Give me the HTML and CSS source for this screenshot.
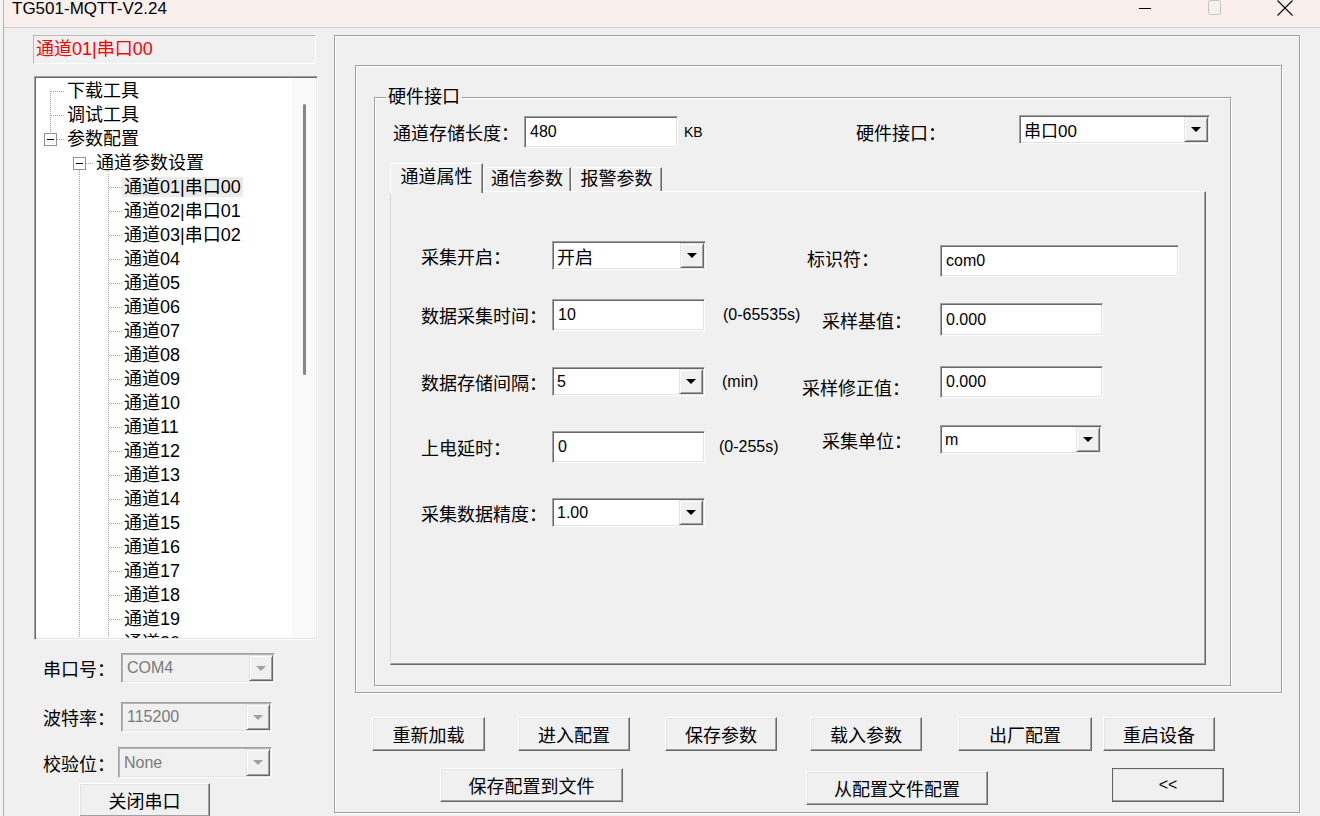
FILE: index.html
```html
<!DOCTYPE html>
<html lang="zh-CN">
<head>
    <meta charset="UTF-8">
    <title>TG501-MQTT-V2.24</title>
    <link rel="stylesheet" href="styles.css">
</head>
<body>
<div class="window">
    <div class="titlebar">
        <span class="title">TG501-MQTT-V2.24</span>
        <div class="caption-buttons">
            <span class="cap"><svg width="14" height="16"><line x1="1" y1="8.5" x2="13" y2="8.5" stroke="#000"/></svg></span>
            <span class="cap"><svg width="14" height="16"><rect x="0.5" y="0.5" width="12" height="14" rx="2" fill="none" stroke="#c4c4c4"/></svg></span>
            <span class="cap"><svg width="16" height="16"><path d="M0.5 0.5 L15.5 15.5 M15.5 0.5 L0.5 15.5" stroke="#000" stroke-width="1.1"/></svg></span>
        </div>
    </div>

    <div class="main">
        <!-- left: channel tree + serial port -->
        <div class="left">
            <div class="status">通道01|串口00</div>

            <div class="tree">
                <div class="tree-body">
                    <svg class="tree-lines" width="256" height="560">
                        <path d="M14.5 13 V55 M15 13.5 H28 M15 37.5 H28 M21 61.5 H28 M50 85.5 H57 M43.5 92 V560 M72.5 96 V560
                                 M73 109.5 H86 M73 133.5 H86 M73 157.5 H86 M73 181.5 H86 M73 205.5 H86 M73 229.5 H86
                                 M73 253.5 H86 M73 277.5 H86 M73 301.5 H86 M73 325.5 H86 M73 349.5 H86 M73 373.5 H86
                                 M73 397.5 H86 M73 421.5 H86 M73 445.5 H86 M73 469.5 H86 M73 493.5 H86 M73 517.5 H86 M73 541.5 H86"
                              stroke="#a0a0a0" stroke-dasharray="1 1" fill="none"/>
                        <rect x="8.5" y="55.5" width="12" height="12" fill="#fff" stroke="#919191"/>
                        <path d="M11 61.5 H18" stroke="#000"/>
                        <rect x="37.5" y="79.5" width="12" height="12" fill="#fff" stroke="#919191"/>
                        <path d="M40 85.5 H47" stroke="#000"/>
                    </svg>
                    <div class="node l0">下载工具</div>
                    <div class="node l0">调试工具</div>
                    <div class="node l0">参数配置</div>
                    <div class="node l1">通道参数设置</div>
                    <div class="node l2 selected"><span>通道01|串口00</span></div>
                    <div class="node l2">通道02|串口01</div>
                    <div class="node l2">通道03|串口02</div>
                    <div class="node l2">通道04</div>
                    <div class="node l2">通道05</div>
                    <div class="node l2">通道06</div>
                    <div class="node l2">通道07</div>
                    <div class="node l2">通道08</div>
                    <div class="node l2">通道09</div>
                    <div class="node l2">通道10</div>
                    <div class="node l2">通道11</div>
                    <div class="node l2">通道12</div>
                    <div class="node l2">通道13</div>
                    <div class="node l2">通道14</div>
                    <div class="node l2">通道15</div>
                    <div class="node l2">通道16</div>
                    <div class="node l2">通道17</div>
                    <div class="node l2">通道18</div>
                    <div class="node l2">通道19</div>
                    <div class="node l2">通道20</div>
                </div>
                <div class="scroll"><div class="thumb"></div></div>
            </div>

            <div class="port-row row-port">
                <span class="port-label">串口号：</span>
                <div class="combo disabled w154"><span class="value">COM4</span><span class="drop"></span></div>
            </div>
            <div class="port-row row-baud">
                <span class="port-label">波特率：</span>
                <div class="combo disabled w151"><span class="value">115200</span><span class="drop"></span></div>
            </div>
            <div class="port-row row-parity">
                <span class="port-label narrow">校验位：</span>
                <div class="combo disabled w154"><span class="value">None</span><span class="drop"></span></div>
            </div>
            <button class="btn close-port">关闭串口</button>
        </div>

        <!-- right: channel parameters -->
        <div class="frame-outer">
            <div class="frame-inner">
                <div class="group">
                    <div class="legend">硬件接口</div>

                    <div class="store-row">
                        <span class="lbl">通道存储长度：</span>
                        <input class="edit store-edit" value="480">
                        <span class="unit">KB</span>
                        <span class="hw-lbl">硬件接口：</span>
                        <div class="combo hw-combo"><span class="value cjk">串口00</span><span class="drop"></span></div>
                    </div>

                    <div class="tabs">
                        <div class="tab active">通道属性</div>
                        <div class="tab t-comm">通信参数</div>
                        <div class="tab t-alarm">报警参数</div>
                    </div>

                    <div class="tab-page">
                        <div class="col-left">
                            <div class="frow row-open">
                                <span class="lbl">采集开启：</span>
                                <div class="combo w154"><span class="value cjk">开启</span><span class="drop"></span></div>
                            </div>
                            <div class="frow row-period">
                                <span class="lbl">数据采集时间：</span>
                                <input class="edit w153" value="10">
                                <span class="note n-period">(0-65535s)</span>
                            </div>
                            <div class="frow row-interval">
                                <span class="lbl">数据存储间隔：</span>
                                <div class="combo w153"><span class="value">5</span><span class="drop"></span></div>
                                <span class="note n-interval">(min)</span>
                            </div>
                            <div class="frow row-delay">
                                <span class="lbl">上电延时：</span>
                                <input class="edit w153" value="0">
                                <span class="note n-delay">(0-255s)</span>
                            </div>
                            <div class="frow row-precision">
                                <span class="lbl">采集数据精度：</span>
                                <div class="combo w153"><span class="value">1.00</span><span class="drop"></span></div>
                            </div>
                        </div>

                        <div class="col-right">
                            <div class="frow row-tag">
                                <span class="rlbl">标识符：</span>
                                <input class="edit w239" value="com0">
                            </div>
                            <div class="frow row-base">
                                <span class="rlbl">采样基值：</span>
                                <input class="edit w163" value="0.000">
                            </div>
                            <div class="frow row-fix">
                                <span class="rlbl">采样修正值：</span>
                                <input class="edit w163" value="0.000">
                            </div>
                            <div class="frow row-unit">
                                <span class="rlbl">采集单位：</span>
                                <div class="combo w162"><span class="value">m</span><span class="drop"></span></div>
                            </div>
                        </div>
                    </div>
                </div>
            </div>

            <div class="btn-row first">
                <button class="btn b-reload">重新加载</button>
                <button class="btn b-enter">进入配置</button>
                <button class="btn b-save">保存参数</button>
                <button class="btn b-load">载入参数</button>
                <button class="btn b-factory">出厂配置</button>
                <button class="btn b-reboot">重启设备</button>
            </div>
            <div class="btn-row second">
                <button class="btn b-tofile">保存配置到文件</button>
                <button class="btn b-fromfile">从配置文件配置</button>
                <button class="btn b-back">&lt;&lt;</button>
            </div>
        </div>
    </div>
</div>
</body>
</html>
```

FILE: styles.css
```css
* {
    box-sizing: border-box;
}
body {
    margin: 0;
    width: 1320px;
    height: 816px;
    overflow: hidden;
    background: #f3f3f3;
    font-family: "Liberation Sans", "Noto Sans CJK SC", sans-serif;
    font-size: 18px;
    color: #000;
}
.window {
    margin-left: 3px;
    border-left: 1px solid #b4b4b4;
    height: 816px;
    background: #f0f0f0;
}
.titlebar {
    height: 28px;
    border-bottom: 1px solid #cdcdcd;
    background: #f9efed;
    display: flex;
}
.title {
    padding-left: 8px;
    font-size: 17px;
    line-height: 17px;
}
.caption-buttons {
    margin-left: auto;
    display: flex;
}
.cap {
    width: 70px;
    display: flex;
    justify-content: center;
}
.main {
    display: flex;
    height: 788px;
}

/* left side */
.left {
    width: 326px;
    flex-shrink: 0;
}
.status {
    margin: 7px 0 0 29px;
    width: 283px;
    height: 29px;
    border: 1px solid;
    border-color: #b9b9b9 #fff #fff #b9b9b9;
    color: #f00;
    line-height: 27px;
    padding-left: 2px;
}
.tree {
    margin: 12px 0 0 30px;
    width: 284px;
    height: 564px;
    border: 1px solid;
    border-color: #a0a0a0 #fff #fff #a0a0a0;
    padding: 1px;
    box-shadow: inset 1px 1px #696969, inset -1px -1px #e3e3e3;
    display: flex;
}
.tree-body {
    position: relative;
    width: 256px;
    background: #fff;
    overflow: hidden;
    padding-top: 1px;
}
.tree-lines {
    position: absolute;
    left: 0;
    top: 0;
}
.node {
    position: relative;
    height: 24px;
    line-height: 24px;
    white-space: nowrap;
}
.l0 { padding-left: 31px; }
.l1 { padding-left: 60px; }
.l2 { padding-left: 88px; }
.selected span {
    background: #ebebeb;
    padding: 0 2px;
    margin-left: -2px;
}
.scroll {
    width: 24px;
    background: #f9f9f9;
    padding: 26px 0 0 11px;
}
.thumb {
    width: 3px;
    height: 271px;
    background: #868686;
    border-radius: 2px;
}
.port-row {
    display: flex;
    align-items: center;
    margin-left: 39px;
}
.port-label { width: 78px; }
.port-label.narrow { width: 75px; }
.row-port { margin-top: 13px; height: 30px; }
.row-baud { margin-top: 19px; height: 30px; }
.row-parity { margin-top: 15px; height: 31px; }
.close-port {
    margin: 5px 0 0 75px;
    width: 131px;
}

/* controls */
.combo {
    display: flex;
    height: 100%;
    border: 1px solid;
    border-color: #a0a0a0 #fff #fff #a0a0a0;
    padding: 1px;
    box-shadow: inset 1px 1px #696969, inset -1px -1px #e3e3e3;
    background: #fff;
    font-size: 16px;
    flex-shrink: 0;
}
.combo .value {
    flex: 1;
    padding-left: 3px;
    display: flex;
    align-items: center;
}
.combo .cjk { font-size: 18px; }
.combo .drop {
    width: 24px;
    border: 1px solid;
    border-color: #e3e3e3 #696969 #696969 #e3e3e3;
    box-shadow: inset 1px 1px #fff, inset -1px -1px #a0a0a0;
    background: #f0f0f0;
    display: flex;
    align-items: center;
    justify-content: center;
}
.combo .drop::after {
    content: "";
    border-left: 5px solid transparent;
    border-right: 5px solid transparent;
    border-top: 5px solid #000;
}
.combo.disabled {
    background: #f0f0f0;
    border-color: #a0a0a0 #fff #fff #a0a0a0;
    box-shadow: inset 1px 1px #b4b4b4, inset -1px -1px #e3e3e3;
}
.combo.disabled .value {
    color: #7a7a7a;
    padding-left: 4px;
}
.combo.disabled .drop::after {
    border-top-color: #a0a0a0;
}
.edit {
    height: 100%;
    border: 1px solid;
    border-color: #a0a0a0 #fff #fff #a0a0a0;
    box-shadow: inset 1px 1px #696969, inset -1px -1px #e3e3e3;
    background: #fff;
    font-family: inherit;
    font-size: 16px;
    padding: 0 0 0 5px;
    margin: 0;
    outline: none;
    color: #000;
    flex-shrink: 0;
}
.w151 { width: 151px; }
.w153 { width: 153px; }
.w154 { width: 154px; }
.w162 { width: 162px; }
.w163 { width: 163px; }
.w239 { width: 239px; }
.btn {
    font: inherit;
    font-size: 18px;
    height: 34px;
    padding: 0;
    color: #000;
    background: #f0f0f0;
    border: 1px solid;
    border-color: #fff #696969 #696969 #fff;
    box-shadow: inset -1px -1px #a0a0a0, inset 1px 1px #e3e3e3;
}

/* right side frames */
.frame-outer {
    margin: 7px 0 0 4px;
    width: 966px;
    height: 778px;
    border: 1px solid #a0a0a0;
    box-shadow: inset 1px 1px #fff, 1px 1px #fff;
    padding-left: 20px;
}
.frame-inner {
    margin-top: 29px;
    width: 927px;
    height: 628px;
    border: 1px solid #a0a0a0;
    box-shadow: inset 1px 1px #fff, 1px 1px #fff;
}
.group {
    margin: 31px 0 0 18px;
    width: 857px;
    height: 589px;
    border: 1px solid #a0a0a0;
    box-shadow: inset 1px 1px #fff, 1px 1px #fff;
}
.legend {
    width: fit-content;
    margin: -13px 0 -11px 11px;
    padding: 0 2px;
    line-height: 24px;
    background: #f0f0f0;
}
.store-row {
    display: flex;
    align-items: center;
    height: 34px;
    margin-top: 17px;
}
.store-row .lbl {
    margin-left: 18px;
    width: 131px;
}
.store-edit {
    width: 154px;
    height: 32px;
}
.unit {
    margin-left: 6px;
    width: 18px;
    font-size: 14px;
}
.hw-lbl {
    margin-left: 154px;
    width: 163px;
}
.hw-combo {
    width: 191px;
    height: 29px;
    align-self: flex-start;
}
.hw-combo .cjk { font-size: 17px; }

/* tabs */
.tabs {
    display: flex;
    align-items: flex-end;
    height: 28px;
    margin: 14px 0 0 15px;
}
.tab {
    height: 24px;
    width: 88px;
    border: 1px solid;
    border-bottom: none;
    border-color: #fff #696969 transparent #fff;
    box-shadow: inset -1px 0 #a0a0a0;
    text-align: center;
    line-height: 22px;
    background: #f0f0f0;
}
.tab.active {
    width: 93px;
    height: 30px;
    margin-bottom: -2px;
    position: relative;
    z-index: 1;
    line-height: 27px;
}
.tab.t-alarm { width: 91px; }
.tab-page {
    margin-left: 15px;
    width: 816px;
    height: 474px;
    border: 1px solid;
    border-color: #fff #696969 #696969 #d9d9d9;
    box-shadow: inset -1px -1px #a0a0a0;
    display: flex;
}
.col-left {
    margin-left: 30px;
    width: 379px;
    flex-shrink: 0;
}
.frow {
    display: flex;
    align-items: center;
    white-space: nowrap;
}
.frow .lbl { width: 131px; flex-shrink: 0; }
.row-open { margin-top: 49px; height: 29px; }
.row-period { margin-top: 29px; height: 32px; }
.row-interval { margin-top: 36px; height: 29px; }
.row-delay { margin-top: 35px; height: 32px; }
.row-precision { margin-top: 35px; height: 29px; }
.note { font-size: 16px; white-space: nowrap; }
.n-period { margin-left: 18px; }
.n-interval { margin-left: 17px; }
.n-delay { margin-left: 14px; }
.rlbl { width: 140px; flex-shrink: 0; }
.row-tag { margin-top: 53px; height: 32px; }
.row-tag .rlbl { padding-left: 7px; margin-bottom: 6px; }
.row-base { margin-top: 26px; height: 33px; }
.row-base .rlbl { padding-left: 22px; }
.row-fix { margin-top: 30px; height: 32px; }
.row-fix .rlbl { padding-left: 2px; margin-top: 10px; }
.row-unit { margin-top: 27px; height: 29px; }
.row-unit .rlbl { padding-left: 22px; }

/* bottom buttons */
.btn-row {
    display: flex;
    align-items: flex-start;
}
.btn-row.first { margin: 24px 0 0 17px; }
.btn-row.second { margin: 17px 0 0 85px; }
.b-reload { width: 113px; }
.b-enter { width: 112px; margin-left: 33px; }
.b-save { width: 112px; margin-left: 35px; }
.b-load { width: 112px; margin-left: 33px; }
.b-factory { width: 134px; margin-left: 36px; }
.b-reboot { width: 112px; margin-left: 11px; }
.b-tofile { width: 183px; }
.b-fromfile { width: 182px; margin: 3px 0 0 183px; }
.b-back {
    width: 112px;
    margin-left: 124px;
    font-size: 16px;
    border-color: #646464;
}
```
